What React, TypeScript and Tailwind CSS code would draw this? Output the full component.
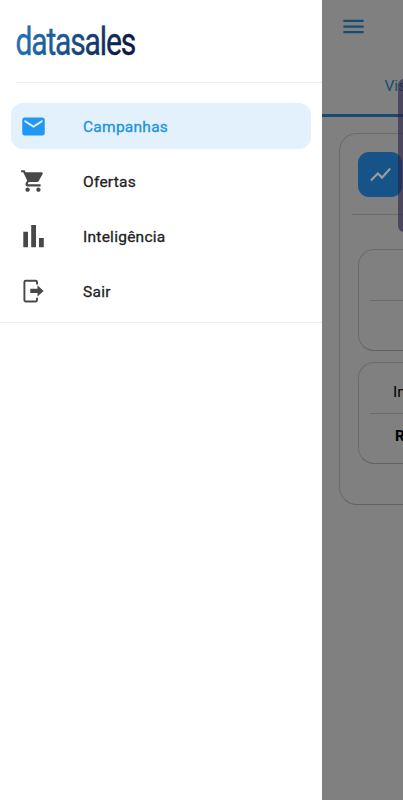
import { MdMenu, MdMail, MdShoppingCart, MdShowChart } from "react-icons/md";
import type { ReactNode } from "react";

function BarsIcon() {
  return (
    <svg width="26" height="26" viewBox="0 0 26 26" fill="currentColor">
      <path d="M3.3 8.7H8v15.5H3.3zM11.2 2H16v22.2h-4.8zM19 15h4.8v9.2H19z" />
    </svg>
  );
}

function ExitIcon() {
  return (
    <svg width="26" height="26" viewBox="0 0 26 26" fill="none">
      <path d="M17 6.4V3.9a1.2 1.2 0 0 0-1.2-1.2H5.6a1.2 1.2 0 0 0-1.2 1.2v18.4a1.2 1.2 0 0 0 1.2 1.2h10.2a1.2 1.2 0 0 0 1.2-1.2v-2.6" stroke="currentColor" strokeWidth="1.9" />
      <path d="M10.3 10.8h7.2V7.3l6.1 5.6-6.1 5.6V15h-7.2z" fill="currentColor" />
    </svg>
  );
}

type MenuItemProps = {
  icon: ReactNode;
  label: string;
  active?: boolean;
};

function MenuItem({ icon, label, active }: MenuItemProps) {
  return (
    <li
      className={`flex h-[46px] items-center rounded-xl pl-[9px] ${
        active ? "bg-[#e3f1fc] text-[#1b93e0]" : "text-[#222222]"
      }`}
    >
      <span className={`w-[63px] ${active ? "text-[#2196f3]" : "text-[#484848]"}`}>{icon}</span>
      <span className="pt-[2px] text-[15.5px] font-normal leading-5 tracking-[0.26px] [-webkit-text-stroke:0.3px_currentColor]">
        {label}
      </span>
    </li>
  );
}

function Drawer() {
  return (
    <aside className="h-full w-[322px] shrink-0 bg-white">
      <header className="ml-4 h-[83px] border-b border-[#eeeeee] pt-[21px]">
        <svg width="122" height="42" viewBox="0 0 122 42">
          <defs>
            <linearGradient id="brand" x1="0" x2="1" y1="0" y2="0.2">
              <stop offset="0" stopColor="#2478b8" />
              <stop offset="0.5" stopColor="#1c5590" />
              <stop offset="1" stopColor="#0b1b40" />
            </linearGradient>
          </defs>
          <text
            x="-0.5"
            y="34.4"
            textLength="119.5"
            lengthAdjust="spacingAndGlyphs"
            fill="url(#brand)"
            stroke="url(#brand)"
            strokeWidth="0.4"
            className="text-[38px] tracking-[-1.5px]"
          >
            datasales
          </text>
        </svg>
      </header>
      <nav className="border-b border-[#eeeeee] pt-5 pb-2">
        <ul className="ml-[11px] mr-[11px] flex flex-col gap-[9px]">
          <MenuItem active icon={<MdMail size={27} />} label="Campanhas" />
          <MenuItem icon={<MdShoppingCart size={26} />} label="Ofertas" />
          <MenuItem icon={<BarsIcon />} label="Inteligência" />
          <MenuItem icon={<ExitIcon />} label="Sair" />
        </ul>
      </nav>
    </aside>
  );
}

// Dashboard under the drawer, colours already dimmed by the backdrop
function Dashboard() {
  return (
    <main className="h-full w-[81px] overflow-hidden bg-[#808080] text-black">
      <div className="w-[403px]">
        <div className="h-[57px] pl-[18px] pt-[13px] text-[#164c74]">
          <MdMenu size={27} />
        </div>
        <div className="flex h-[60px] items-center border-b-[3px] border-[#164c74] pl-[62.5px] pt-[2px] text-[15.5px] text-[#164c74]">
          Visão geral
        </div>
        <section className="ml-[17px] mt-4 h-[372px] w-[370px] rounded-[18px] border border-[#6c6c6c] border-b-[#626262] pt-[18px] pl-3">
          <div className="h-[63px] border-b border-[#6c6c6c] pl-[6px]">
            <div className="flex h-[45px] w-11 items-center justify-center rounded-[11px] bg-[#165389] text-[#9c9c9c]">
              <MdShowChart size={25} />
            </div>
          </div>
          <div className="ml-[6px] mt-[34px] flex flex-col gap-[11px]">
            <div className="h-[102px] w-[330px] rounded-2xl border border-[#6c6c6c] border-b-[#626262] pl-[11px]">
              <div className="h-[51px] border-b border-[#6c6c6c]" />
            </div>
            <div className="h-[102px] w-[330px] rounded-2xl border border-[#6c6c6c] border-b-[#626262] pl-[11px]">
              <div className="flex h-[51px] items-center border-b border-[#6c6c6c] pl-[23px] pt-[10px] text-[15.5px]">
                Investimento
              </div>
              <div className="flex h-[45px] items-center pl-[25px] text-[15px] font-bold">R$ 0,00</div>
            </div>
          </div>
        </section>
      </div>
    </main>
  );
}

export default function App() {
  return (
    <div className="relative flex h-[800px] w-[403px] overflow-hidden bg-white font-['Roboto',sans-serif]">
      <Drawer />
      <Dashboard />
      <div className="absolute left-[398px] top-[79px] h-[153px] w-3 rounded-md bg-[#2a2244]/60" />
    </div>
  );
}
